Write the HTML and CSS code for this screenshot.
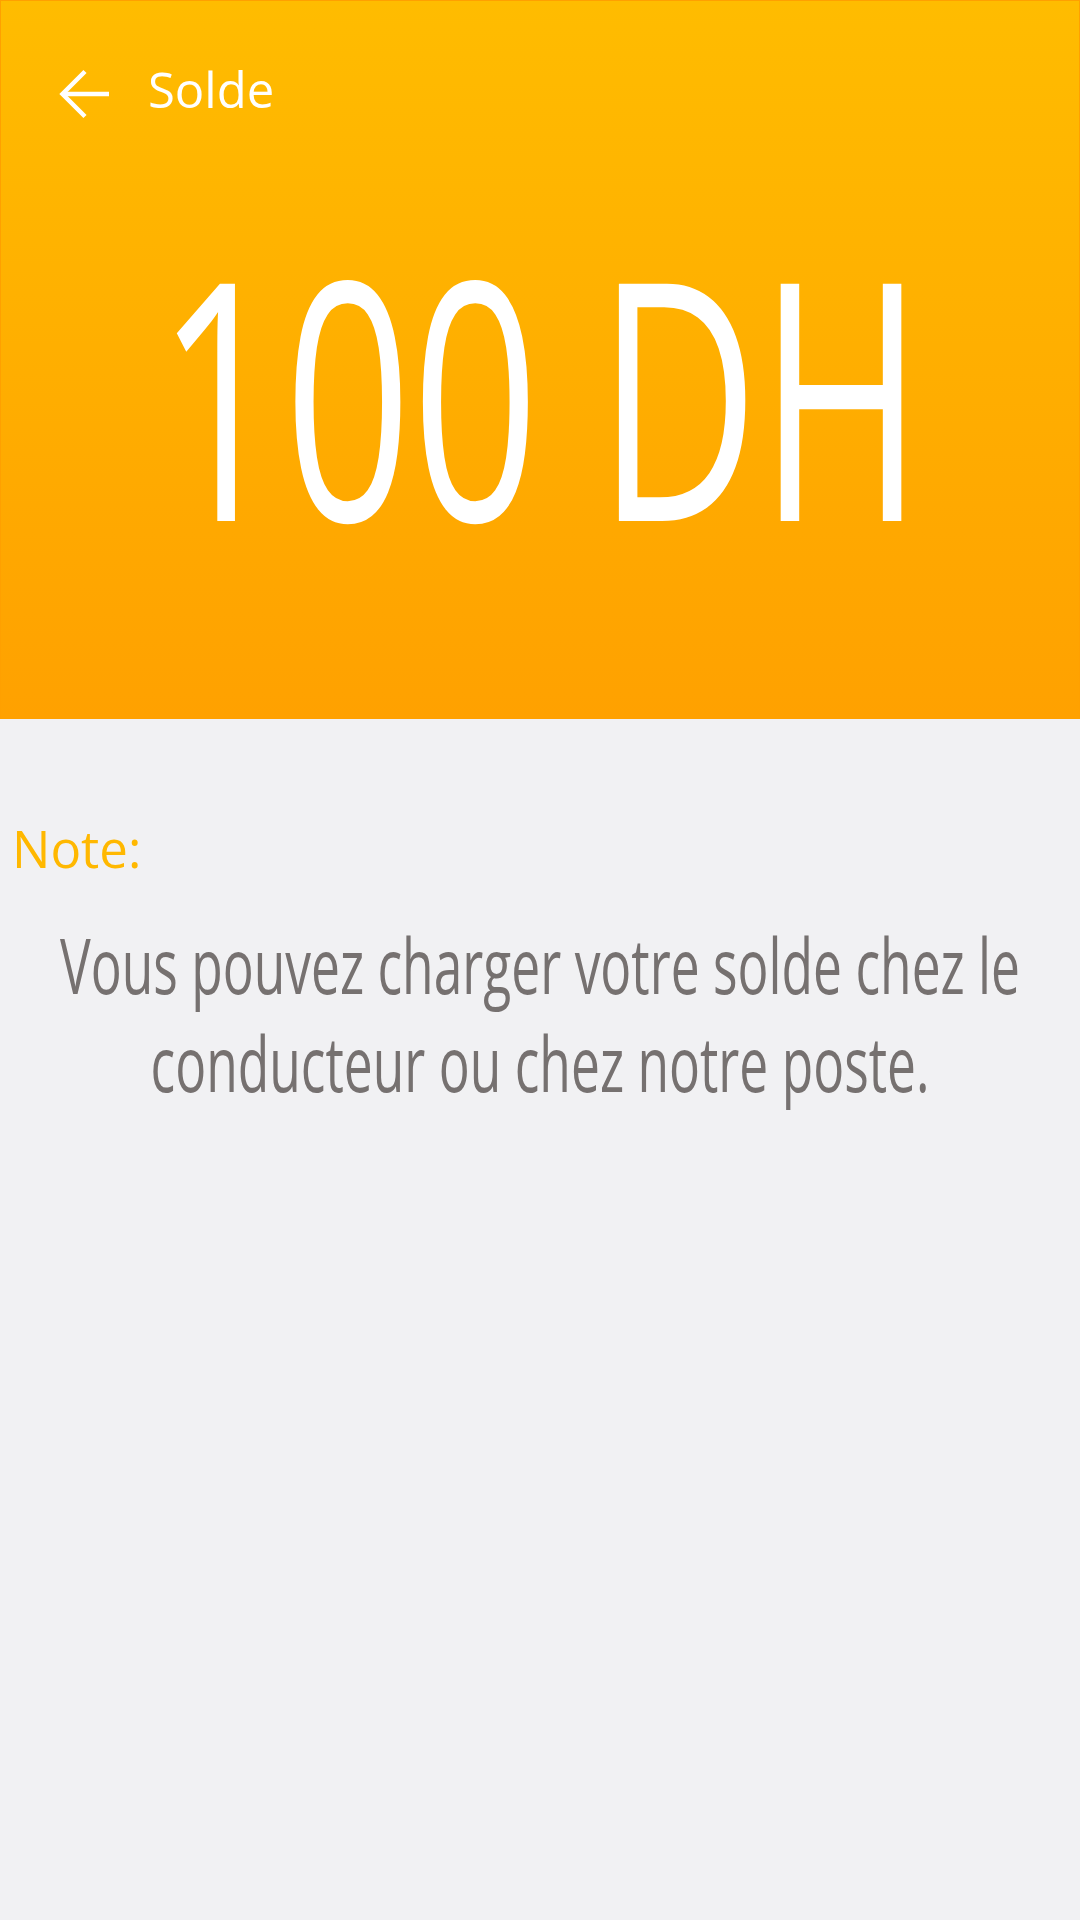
FILE: index.html
```html
<!DOCTYPE html>
<html lang="fr">
<head>
<meta charset="utf-8">
<title>Solde</title>
<link rel="stylesheet" href="styles.css">
</head>
<body>
<div class="screen">
  <header class="hero">
    <div class="topbar">
      <div class="back" aria-label="Retour">
        <svg width="52" height="52" viewBox="0 0 52 52" fill="none" stroke="#ffffff" stroke-width="4.5" stroke-linecap="butt" stroke-linejoin="miter">
          <path d="M4 26 H51"/>
          <path d="M27 3.5 L4.5 26 L27 48.5"/>
        </svg>
      </div>
      <div class="title">Solde</div>
    </div>
    <div class="amount">100 DH</div>
  </header>
  <main class="content">
    <div class="note-label">Note:</div>
    <p class="note-text">Vous pouvez charger votre solde chez le conducteur ou chez notre poste.</p>
  </main>
</div>
</body>
</html>
```

FILE: styles.css
```css
html, body {
  margin: 0;
  padding: 0;
}

body {
  background: #f1f1f3;
  font-family: "Open Sans", "Noto Sans", sans-serif;
}

.screen {
  width: 1080px;
  min-height: 1920px;
  display: flex;
  flex-direction: column;
  background: #f1f1f3;
}

.hero {
  box-sizing: border-box;
  height: 719px;
  border: 1px solid #ffa000;
  background: linear-gradient(180deg, #ffbc00 0%, #ffa100 100%);
  display: flex;
  flex-direction: column;
  overflow: hidden;
}

.topbar {
  display: flex;
  align-items: flex-start;
  height: 52px;
  padding: 67px 0 0 57px;
}

.back {
  width: 52px;
  height: 52px;
  flex: none;
}

.back svg {
  display: block;
}

.title {
  margin-left: 38px;
  margin-top: -3.5px;
  font-size: 49px;
  line-height: 49px;
  color: #ffffff;
}

.amount {
  margin-top: 106px;
  font-size: 223px;
  line-height: 223px;
  height: 223px;
  color: #ffffff;
  text-align: center;
  white-space: nowrap;
  transform: scaleY(1.49);
  transform-origin: 50% 0;
}

.content {
  display: flex;
  flex-direction: column;
}

.note-label {
  margin-top: 104px;
  padding-left: 12px;
  font-size: 51px;
  line-height: 51px;
  color: #ffb800;
}

.note-text {
  margin: 42px 0 0;
  padding: 0 30px;
  font-size: 51.5px;
  line-height: 65.33px;
  color: #767170;
  text-align: center;
  transform: scaleY(1.5);
  transform-origin: 50% 0;
}
```
